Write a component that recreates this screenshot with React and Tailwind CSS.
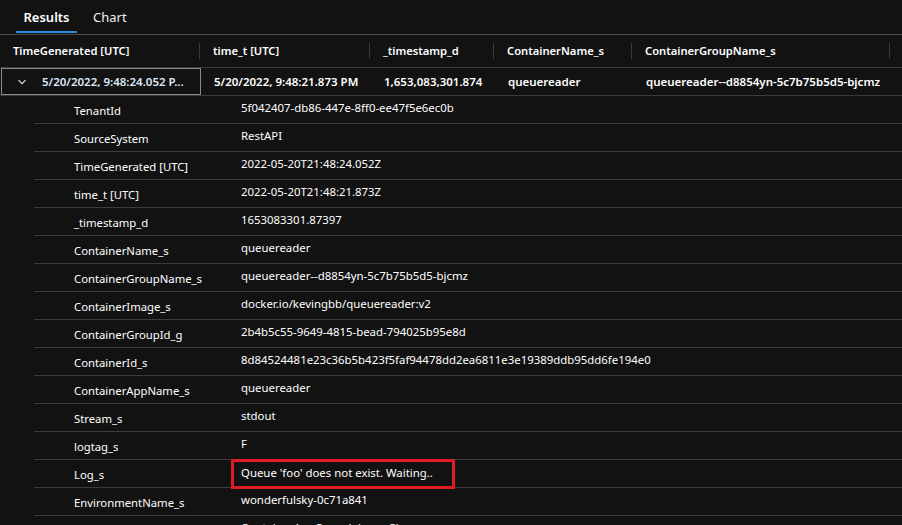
import React from 'react';

const columns = [
  { title: 'TimeGenerated [UTC]', width: 'w-[200px]' },
  { title: 'time_t [UTC]', width: 'w-[170px]' },
  { title: '_timestamp_d', width: 'w-[124px]' },
  { title: 'ContainerName_s', width: 'w-[138px]' },
  { title: 'ContainerGroupName_s', width: 'w-[258px]' },
];

const details = [
  ['TenantId', '5f042407-db86-447e-8ff0-ee47f5e6ec0b'],
  ['SourceSystem', 'RestAPI'],
  ['TimeGenerated [UTC]', '2022-05-20T21:48:24.052Z'],
  ['time_t [UTC]', '2022-05-20T21:48:21.873Z'],
  ['_timestamp_d', '1653083301.87397'],
  ['ContainerName_s', 'queuereader'],
  ['ContainerGroupName_s', 'queuereader--d8854yn-5c7b75b5d5-bjcmz'],
  ['ContainerImage_s', 'docker.io/kevingbb/queuereader:v2'],
  ['ContainerGroupId_g', '2b4b5c55-9649-4815-bead-794025b95e8d'],
  ['ContainerId_s', '8d84524481e23c36b5b423f5faf94478dd2ea6811e3e19389ddb95dd6fe194e0'],
  ['ContainerAppName_s', 'queuereader'],
  ['Stream_s', 'stdout'],
  ['logtag_s', 'F'],
  ['Log_s', "Queue 'foo' does not exist. Waiting..", true],
  ['EnvironmentName_s', 'wonderfulsky-0c71a841'],
  ['Type', 'ContainerAppConsoleLogs_CL'],
];

const ChevronDown = () => (
  <svg width="10" height="10" viewBox="0 0 10 10" fill="none" stroke="currentColor" strokeWidth="1.2">
    <path d="M1.5 3.2 L5 6.7 L8.5 3.2" />
  </svg>
);

export default function App() {
  return (
    <div
      className="w-[902px] h-[525px] overflow-hidden bg-[#121212] text-white text-[13px]"
      style={{ fontFamily: '"Segoe UI", "Noto Sans", "Liberation Sans", sans-serif' }}
    >
      {/* tabs */}
      <div className="flex h-[35px] border-b border-[#4a4a4a] pl-[16px]">
        <div className="relative w-[61px] flex justify-center pt-[8px] font-semibold text-[13px]">
          Results
          <div className="absolute left-0 right-0 bottom-[1px] h-[2px] bg-[#2b8ee6]" />
        </div>
        <div className="ml-[16px] pt-[8px] text-[13px] text-[#f0f0f0]">Chart</div>
      </div>

      {/* header */}
      <div className="flex h-[33px] border-b border-[#3c3c3c] items-center">
        {columns.map((c) => (
          <div key={c.title} className={`${c.width} h-full flex items-center justify-between`}>
            <span className="pl-[13px] text-[11.2px] font-semibold">{c.title}</span>
            <span className="w-px h-[16px] bg-[#3a3a3a]" />
          </div>
        ))}
      </div>

      {/* expanded row */}
      <div className="flex h-[28px] border-b border-[#3c3c3c] items-center text-[11.5px] font-semibold">
        <div className="w-[200px] h-full ml-[1px] border border-[#8a8a8a] flex items-center">
          <span className="ml-[15px] w-[10px] flex text-[#e0e0e0]">
            <ChevronDown />
          </span>
          <span className="ml-[15px] text-[#dce9f7]">5/20/2022, 9:48:24.052 P...</span>
        </div>
        <div className="w-[170px] pl-[13px]">5/20/2022, 9:48:21.873 PM</div>
        <div className="w-[124px] pl-[13px]">1,653,083,301.874</div>
        <div className="w-[138px] pl-[13px]">queuereader</div>
        <div className="w-[258px] pl-[13px]">queuereader--d8854yn-5c7b75b5d5-bjcmz</div>
      </div>

      {/* details */}
      <div className="pl-[34px]">
        {details.map(([label, value, highlight]) => (
          <div key={label} className="flex h-[28px] border-b border-[#3c3c3c] items-center">
            <div className="w-[207px] shrink-0 pl-[40px] pt-[3px] text-[11.3px]">{label}</div>
            {highlight ? (
              <div className="ml-[-10px] h-[30px] w-[224px] border-[3px] border-[#e01b24] flex items-center pl-[7px] pb-[2px] text-[11.4px]">
                {value}
              </div>
            ) : (
              <div className="pb-[3px] text-[11.4px]">{value}</div>
            )}
          </div>
        ))}
      </div>
    </div>
  );
}
